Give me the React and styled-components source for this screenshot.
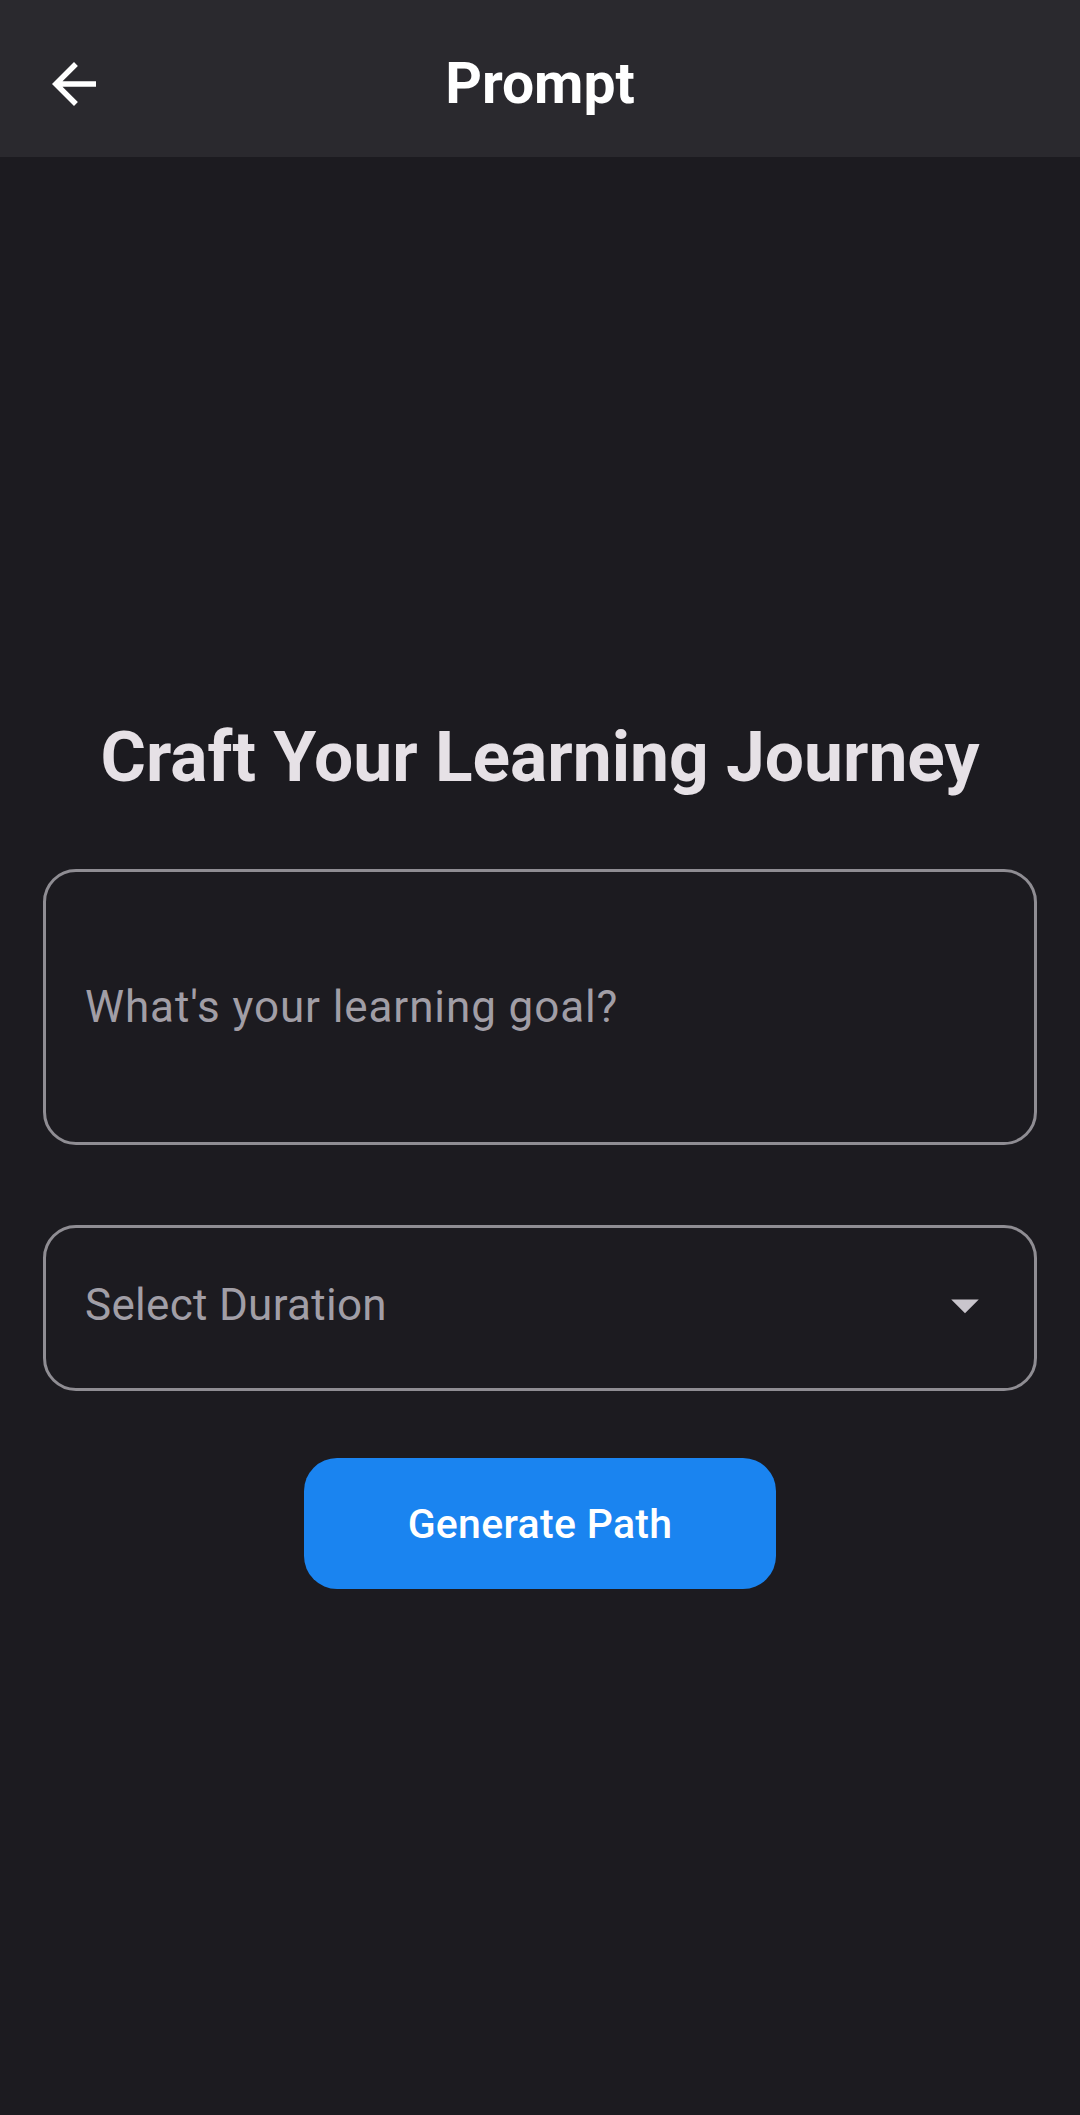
import React from 'react'
import styled, { createGlobalStyle } from 'styled-components'

const GlobalStyle = createGlobalStyle`
  html, body {
    margin: 0;
    padding: 0;
    background: #1c1b20;
  }
  body {
    font-family: Roboto, "Noto Sans", sans-serif;
  }
  * { box-sizing: border-box; }
`

const ArrowBack = () => (
  <svg width="66" height="66" viewBox="0 0 24 24" fill="#ffffff">
    <path d="M20 11H7.83l5.59-5.59L12 4l-8 8 8 8 1.41-1.41L7.83 13H20v-2z" />
  </svg>
)

const DropArrow = () => (
  <svg width="66" height="66" viewBox="0 0 24 24" fill="#c9c5cc">
    <path d="M7 10l5 5 5-5z" />
  </svg>
)

const App = () => {
  const [goal, setGoal] = React.useState('')

  return (
    <Page>
      <GlobalStyle />
      <TopBar>
        <BackButton aria-label="Back">
          <ArrowBack />
        </BackButton>
        <BarTitle>Prompt</BarTitle>
        <span />
      </TopBar>
      <Content>
        <Heading>Craft Your Learning Journey</Heading>
        <GoalInput
          value={goal}
          onChange={(e) => setGoal(e.target.value)}
          placeholder="What's your learning goal?"
        />
        <SelectField>
          <SelectText>Select Duration</SelectText>
          <DropArrow />
        </SelectField>
        <GenerateButton>Generate Path</GenerateButton>
      </Content>
    </Page>
  )
}

export default App

const Page = styled.div`
  min-height: 2115px;
  background: #1c1b20;
  display: flex;
  flex-direction: column;
`

const TopBar = styled.header`
  height: 157px;
  padding-top: 11px;
  background: #2a292e;
  display: grid;
  grid-template-columns: 1fr auto 1fr;
  align-items: center;
`

const BackButton = styled.button`
  justify-self: start;
  margin-left: 41px;
  width: 66px;
  height: 66px;
  padding: 0;
  border: none;
  background: transparent;
  display: flex;
  align-items: center;
  justify-content: center;
  cursor: pointer;
`

const BarTitle = styled.h1`
  margin: 0;
  font-family: Roboto, sans-serif;
  font-size: 57px;
  font-weight: 700;
  color: #ffffff;
  line-height: 1.2;
`

const Content = styled.main`
  padding: 559px 43px 0;
  display: flex;
  flex-direction: column;
  align-items: center;
`

const Heading = styled.h2`
  margin: 0 0 70px;
  font-family: Roboto, sans-serif;
  font-size: 69.5px;
  font-weight: 700;
  line-height: 1.2;
  color: #e6e1e6;
  text-align: center;
`

const GoalInput = styled.input`
  width: 100%;
  height: 276px;
  margin: 0 0 80px;
  padding: 0 39px;
  border: 3px solid #8f8d93;
  border-radius: 33px;
  background: transparent;
  font-family: Roboto, sans-serif;
  font-size: 44px;
  letter-spacing: 0.9px;
  color: #e6e1e6;
  outline: none;

  &::placeholder {
    color: #a19ea6;
  }
`

const SelectField = styled.div`
  width: 100%;
  height: 166px;
  margin: 0 0 67px;
  padding: 0 36px 6px 39px;
  border: 3px solid #8f8d93;
  border-radius: 33px;
  display: flex;
  align-items: center;
  justify-content: space-between;
  cursor: pointer;
`

const SelectText = styled.span`
  font-family: Roboto, sans-serif;
  font-size: 44px;
  letter-spacing: 0.3px;
  color: #a19ea6;
`

const GenerateButton = styled.button`
  width: 472px;
  height: 131px;
  border: none;
  border-radius: 33px;
  background: #1a84f0;
  color: #ffffff;
  font-family: Roboto, sans-serif;
  font-size: 41px;
  font-weight: 500;
  letter-spacing: 0.3px;
  cursor: pointer;
`
